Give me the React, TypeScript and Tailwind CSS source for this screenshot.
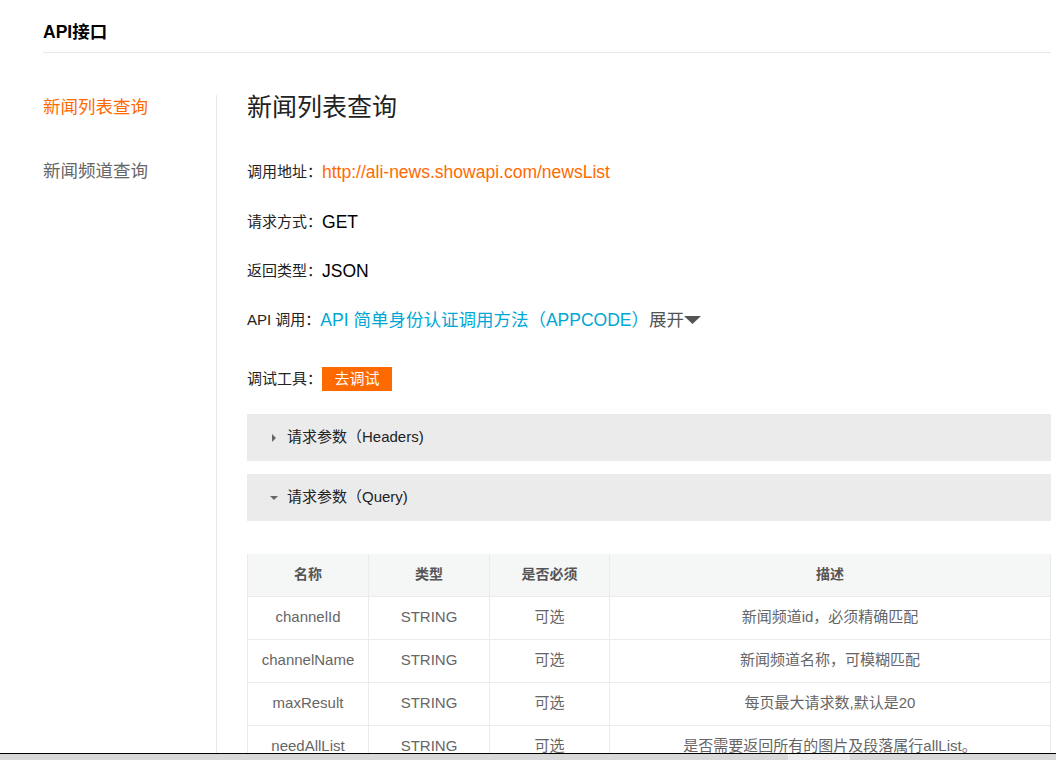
import React from 'react';

const params = [
  { name: 'channelId', type: 'STRING', required: '可选', desc: '新闻频道id，必须精确匹配' },
  { name: 'channelName', type: 'STRING', required: '可选', desc: '新闻频道名称，可模糊匹配' },
  { name: 'maxResult', type: 'STRING', required: '可选', desc: '每页最大请求数,默认是20' },
  { name: 'needAllList', type: 'STRING', required: '可选', desc: '是否需要返回所有的图片及段落属行allList。' },
];

const InfoRow = ({ label, children, className = '' }: { label: string; children: React.ReactNode; className?: string }) => (
  <div className={`flex items-center h-6 ${className}`}>
    <span className="text-[15px] text-[#222]">{label}</span>
    <span className="text-[17.5px]">{children}</span>
  </div>
);

const Caret = ({ open }: { open: boolean }) => (
  <svg width="8" height="8" viewBox="0 0 8 8" className="mr-[9px]">
    {open ? <path d="M0 2 L8 2 L4 6 Z" fill="#666" /> : <path d="M2 0 L6 4 L2 8 Z" fill="#666" />}
  </svg>
);

export default function App() {
  return (
    <div
      className="w-[1056px] h-[760px] flex flex-col overflow-hidden bg-white text-[#222]"
      style={{ fontFamily: '"Liberation Sans", Arial, "Noto Sans CJK SC", sans-serif' }}
    >
      <div className="flex-1 flex flex-col min-h-0">
        {/* Header */}
        <div className="ml-[43px] mr-[5px] h-[53px] pt-[20px] border-b border-[#e8e8e8]">
          <h1 className="text-[17.5px] font-bold leading-6 text-black">API接口</h1>
        </div>

        <div className="flex flex-1 min-h-0 mt-[42px]">
          {/* Side nav */}
          <nav className="w-[173px] ml-[43px] flex flex-col">
            <a className="text-[17.5px] leading-6 text-[#ff6a00]">新闻列表查询</a>
            <a className="text-[17.5px] leading-6 text-[#666] mt-[40px]">新闻频道查询</a>
          </nav>

          {/* Content */}
          <div className="border-l border-[#e8e8e8] pl-[30px] w-[835px]">
            <h2 className="text-[25px] leading-6 text-[#222]">新闻列表查询</h2>

            <InfoRow label="调用地址：" className="mt-[41px]">
              <span className="text-[#ff6a00]">http://ali-news.showapi.com/newsList</span>
            </InfoRow>
            <InfoRow label="请求方式：" className="mt-[26px]">
              <span className="text-black">GET</span>
            </InfoRow>
            <InfoRow label="返回类型：" className="mt-[25px]">
              <span className="text-black">JSON</span>
            </InfoRow>
            <div className="flex items-center h-6 mt-[25px]">
              <span className="text-[15px] text-[#222]">API 调用：</span>
              <span className="text-[17.5px] text-[#00a7d5]">API 简单身份认证调用方法（APPCODE）</span>
              <span className="text-[17.5px] text-[#555]">展开</span>
              <svg width="17" height="10" viewBox="0 0 17 10">
                <path d="M0 1 L17 1 L8.5 9 Z" fill="#555" />
              </svg>
            </div>

            <div className="flex items-center h-6 mt-[35px]">
              <span className="text-[15px] text-[#222]">调试工具：</span>
              <button className="w-[70px] h-6 bg-[#ff6a00] text-white text-[15px] leading-6">去调试</button>
            </div>

            <div className="mt-[23px] h-[47px] bg-[#ebebeb] flex items-center pl-[23px] text-[15px] text-[#222]">
              <Caret open={false} />
              <span>请求参数（Headers)</span>
            </div>
            <div className="mt-[13px] h-[47px] bg-[#ebebeb] flex items-center pl-[23px] text-[15px] text-[#222]">
              <Caret open={true} />
              <span>请求参数（Query)</span>
            </div>

            <table className="mt-[33px] w-[804px] border-collapse table-fixed">
              <colgroup>
                <col className="w-[121px]" />
                <col className="w-[121px]" />
                <col className="w-[120px]" />
                <col />
              </colgroup>
              <thead>
                <tr className="h-[42px] bg-[#f5f6f6]">
                  {['名称', '类型', '是否必须', '描述'].map((h) => (
                    <th key={h} className="border-x border-[#ebebeb] text-[14px] font-bold text-[#555]">
                      {h}
                    </th>
                  ))}
                </tr>
              </thead>
              <tbody>
                {params.map((p) => (
                  <tr key={p.name} className="h-[43px] text-[15px] text-[#666] text-center">
                    <td className="border border-[#ebebeb]">{p.name}</td>
                    <td className="border border-[#ebebeb]">{p.type}</td>
                    <td className="border border-[#ebebeb]">{p.required}</td>
                    <td className="border border-[#ebebeb]">{p.desc}</td>
                  </tr>
                ))}
              </tbody>
            </table>
          </div>
        </div>
      </div>

      {/* Horizontal scrollbar */}
      <div className="h-[7px] shrink-0 border-t border-black bg-[#d9d9d9] flex">
        <div className="ml-[788px] w-[62px] bg-[#ececec]" />
      </div>
    </div>
  );
}
